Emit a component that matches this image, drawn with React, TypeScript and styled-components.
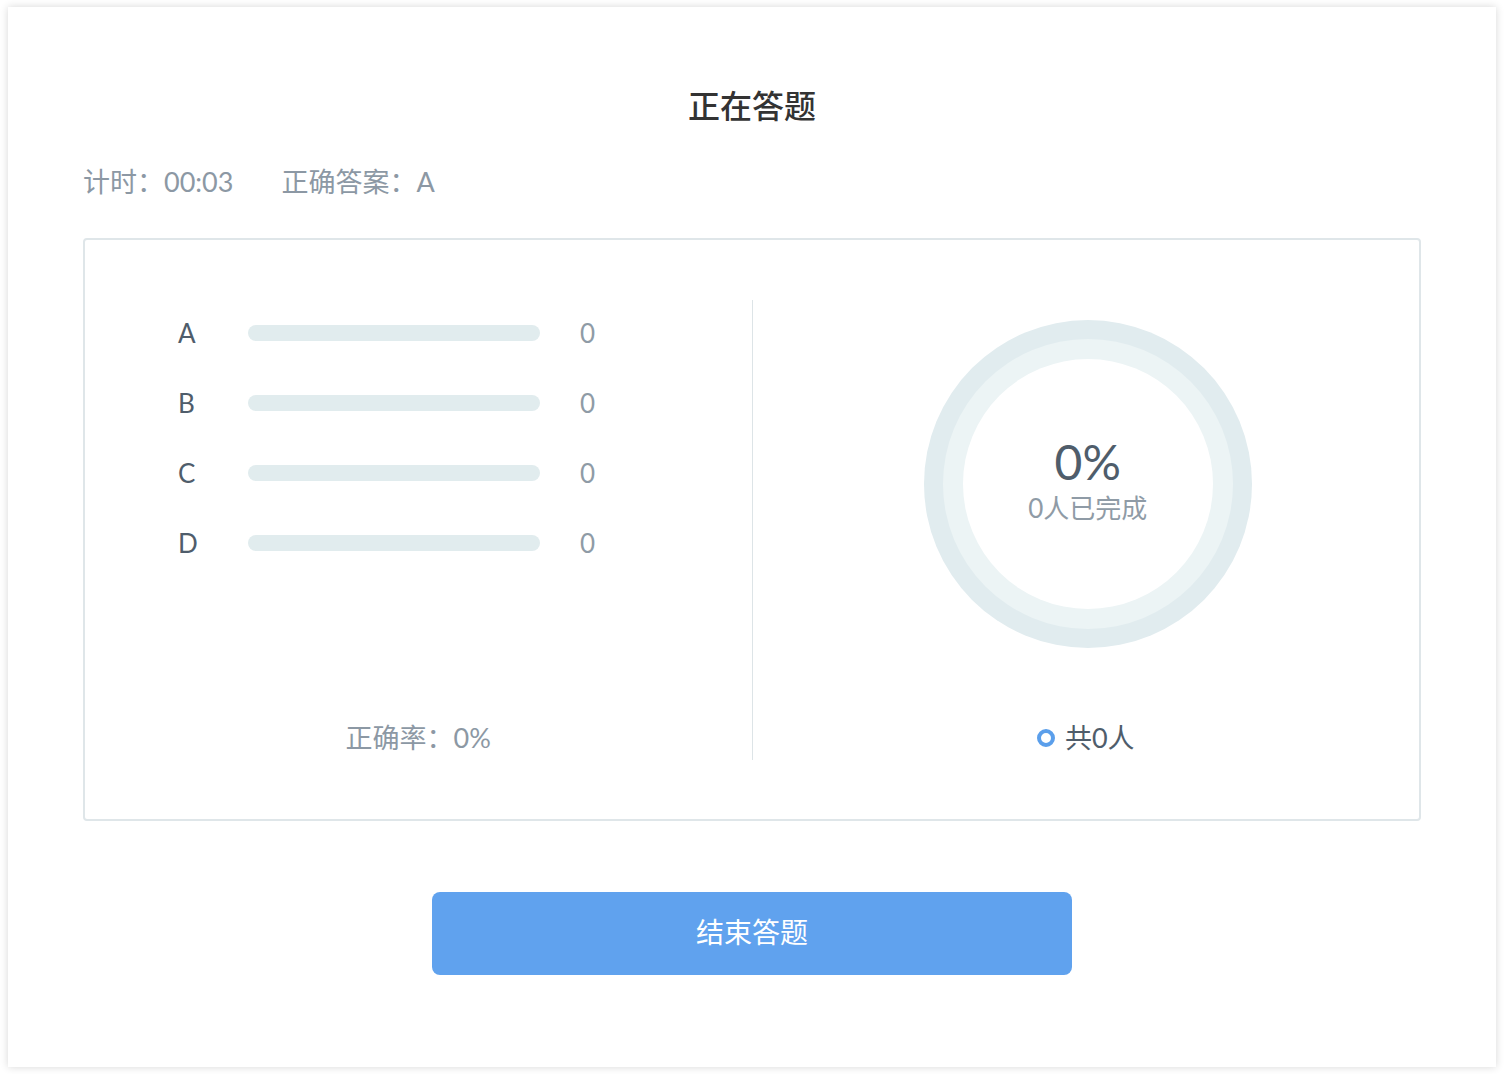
import React from "react";
import styled, { createGlobalStyle } from "styled-components";

const GlobalStyle = createGlobalStyle`
  html, body {
    margin: 0;
    background: #ffffff;
  }
  body {
    padding: 7px 8px;
    font-family: Lato, "Noto Sans CJK SC", sans-serif;
  }
`;

const Modal = styled.div`
  width: 1488px;
  height: 1060px;
  box-sizing: border-box;
  background: #fff;
  box-shadow: 0 0 8px rgba(0, 0, 0, 0.16);
  padding: 79px 75px 0;
  display: flex;
  flex-direction: column;
`;

const Title = styled.h2`
  margin: 0;
  font-size: 32px;
  line-height: 40px;
  font-weight: 500;
  color: #333;
  text-align: center;
`;

const Info = styled.div`
  margin-top: 38px;
  display: flex;
  gap: 48px;
  font-size: 27px;
  line-height: 36px;
  color: #8c98a4;
`;

const StatBox = styled.div`
  margin-top: 38px;
  height: 583px;
  box-sizing: border-box;
  border: 2px solid #dfe6e9;
  border-radius: 4px;
  padding: 60px 0 59px;
  display: flex;
`;

const Column = styled.div<{ $divider?: boolean }>`
  flex: 1;
  display: flex;
  flex-direction: column;
  align-items: center;
  border-right: ${(p) => (p.$divider ? "1px solid #dde4e7" : "none")};
`;

const Options = styled.div`
  align-self: flex-start;
  padding-left: 93px;
`;

const OptionRow = styled.div`
  height: 70px;
  display: grid;
  grid-template-columns: 70px 292px 40px auto;
  align-items: center;
  padding-bottom: 4px;
  box-sizing: border-box;
`;

const Letter = styled.span`
  font-size: 26px;
  color: #4f5d6b;
`;

const Bar = styled.div`
  grid-column: 2;
  height: 16px;
  border-radius: 8px;
  background: #e1ecee;
`;

const Count = styled.span`
  grid-column: 4;
  font-size: 26px;
  color: #8f9ba6;
`;

const Footer = styled.div<{ $dark?: boolean }>`
  margin-top: auto;
  display: flex;
  align-items: center;
  gap: 10px;
  font-size: 27px;
  line-height: 44px;
  color: ${(p) => (p.$dark ? "#4f5d6b" : "#8c98a4")};
`;

const Ring = styled.div`
  margin: 20px 0 0 4px;
  width: 328px;
  height: 328px;
  box-sizing: border-box;
  border-radius: 50%;
  background: #e1ecef;
  padding: 19px;
`;

const RingInner = styled.div`
  width: 100%;
  height: 100%;
  box-sizing: border-box;
  border-radius: 50%;
  background: #ecf4f5;
  padding: 20px;
`;

const RingCenter = styled.div`
  width: 100%;
  height: 100%;
  border-radius: 50%;
  background: #fff;
  display: flex;
  flex-direction: column;
  align-items: center;
  justify-content: center;
`;

const Percent = styled.div`
  font-size: 48px;
  line-height: 48px;
  color: #4f5d6b;
`;

const Done = styled.div`
  font-size: 26px;
  line-height: 44px;
  color: #8f9ba6;
`;

const Dot = styled.span`
  width: 18px;
  height: 18px;
  box-sizing: border-box;
  border-radius: 50%;
  border: 4px solid #5b9feb;
  background: #fff;
`;

const EndButton = styled.button`
  margin: 71px auto 0;
  width: 640px;
  height: 83px;
  padding: 0 0 5px;
  border: none;
  border-radius: 8px;
  background: #60a2ee;
  color: #fff;
  font-family: inherit;
  font-size: 28px;
  cursor: pointer;
`;

const options = ["A", "B", "C", "D"];

export default function App() {
  return (
    <>
      <GlobalStyle />
      <Modal>
        <Title>正在答题</Title>
        <Info>
          <span>计时：00:03</span>
          <span>正确答案：A</span>
        </Info>
        <StatBox>
          <Column $divider>
            <Options>
              {options.map((o) => (
                <OptionRow key={o}>
                  <Letter>{o}</Letter>
                  <Bar />
                  <Count>0</Count>
                </OptionRow>
              ))}
            </Options>
            <Footer>正确率：0%</Footer>
          </Column>
          <Column>
            <Ring>
              <RingInner>
                <RingCenter>
                  <Percent>0%</Percent>
                  <Done>0人已完成</Done>
                </RingCenter>
              </RingInner>
            </Ring>
            <Footer $dark>
              <Dot />
              共0人
            </Footer>
          </Column>
        </StatBox>
        <EndButton>结束答题</EndButton>
      </Modal>
    </>
  );
}
